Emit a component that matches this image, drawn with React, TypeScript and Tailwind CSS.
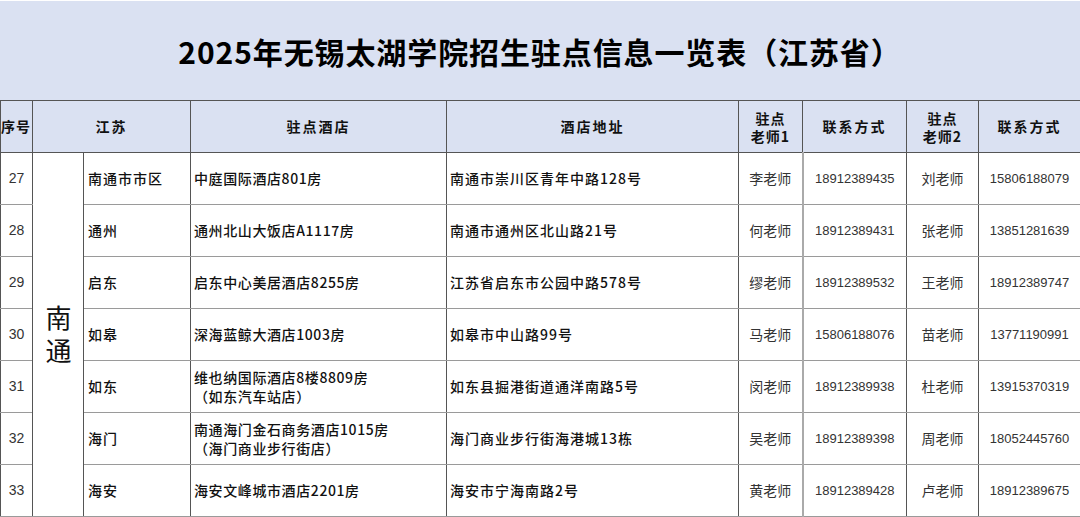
import React from "react";

type Row = {
  no: number;
  district: string;
  hotel: string[];
  addr: string;
  t1: string;
  p1: string;
  t2: string;
  p2: string;
};

const rows: Row[] = [
  { no: 27, district: "南通市市区", hotel: ["中庭国际酒店801房"], addr: "南通市崇川区青年中路128号", t1: "李老师", p1: "18912389435", t2: "刘老师", p2: "15806188079" },
  { no: 28, district: "通州", hotel: ["通州北山大饭店A1117房"], addr: "南通市通州区北山路21号", t1: "何老师", p1: "18912389431", t2: "张老师", p2: "13851281639" },
  { no: 29, district: "启东", hotel: ["启东中心美居酒店8255房"], addr: "江苏省启东市公园中路578号", t1: "缪老师", p1: "18912389532", t2: "王老师", p2: "18912389747" },
  { no: 30, district: "如皋", hotel: ["深海蓝鲸大酒店1003房"], addr: "如皋市中山路99号", t1: "马老师", p1: "15806188076", t2: "苗老师", p2: "13771190991" },
  { no: 31, district: "如东", hotel: ["维也纳国际酒店8楼8809房", "（如东汽车站店）"], addr: "如东县掘港街道通洋南路5号", t1: "闵老师", p1: "18912389938", t2: "杜老师", p2: "13915370319" },
  { no: 32, district: "海门", hotel: ["南通海门金石商务酒店1015房", "（海门商业步行街店）"], addr: "海门商业步行街海港城13栋", t1: "吴老师", p1: "18912389398", t2: "周老师", p2: "18052445760" },
  { no: 33, district: "海安", hotel: ["海安文峰城市酒店2201房"], addr: "海安市宁海南路2号", t1: "黄老师", p1: "18912389428", t2: "卢老师", p2: "18912389675" },
];

const cjk = "font-['Noto_Sans_CJK_SC','Noto_Sans',sans-serif]";
const num = "font-['Liberation_Sans','Noto_Sans_CJK_SC',sans-serif]";

export default function App() {
  return (
    <div className={`w-[1080px] h-[517px] overflow-hidden bg-white ${cjk} text-[#111]`}>
      <div className="h-[100px] bg-[#dae1f2] border-t border-t-white flex items-center justify-center">
        <h1 className="text-[30px] font-bold tracking-[0.9px] leading-none text-black">
          2025年无锡太湖学院招生驻点信息一览表（江苏省）
        </h1>
      </div>
      <table className="table-fixed border-collapse w-[1080px]">
        <colgroup>
          <col className="w-[32px]" />
          <col className="w-[51px]" />
          <col className="w-[107px]" />
          <col className="w-[256px]" />
          <col className="w-[292px]" />
          <col className="w-[64px]" />
          <col className="w-[104px]" />
          <col className="w-[72px]" />
          <col className="w-[102px]" />
        </colgroup>
        <thead>
          <tr className="h-[52px] bg-[#dae1f2] text-[14px]">
            <th className="border border-[#555] p-0 font-semibold whitespace-nowrap overflow-hidden text-right pr-[1px] tracking-[1px]">序号</th>
            <th colSpan={2} className="border border-[#555] p-0 font-semibold tracking-[2px]">江苏</th>
            <th className="border border-[#555] p-0 font-semibold tracking-[2px]">驻点酒店</th>
            <th className="border border-[#555] p-0 font-semibold tracking-[2px]">酒店地址</th>
            <th className="border border-[#555] p-0 font-semibold leading-[18px] tracking-[1px]">驻点<br />老师1</th>
            <th className="border border-[#555] p-0 font-semibold tracking-[2px]">联系方式</th>
            <th className="border border-[#555] p-0 font-semibold leading-[18px] tracking-[1px]">驻点<br />老师2</th>
            <th className="border border-[#555] p-0 font-semibold tracking-[2px]">联系方式</th>
          </tr>
        </thead>
        <tbody>
          {rows.map((r, i) => (
            <tr key={r.no} className="h-[52px]">
              <td className={`border-y border-y-[#9a9a9a] border-x border-x-[#555] p-0 text-center text-[14px] text-[#333] ${num}`}>{r.no}</td>
              {i === 0 && (
                <td rowSpan={7} className="border-y border-y-[#9a9a9a] border-x border-x-[#555] p-0 text-center align-middle">
                  <div className="flex justify-center">
                    <span className="[writing-mode:vertical-rl] [text-orientation:upright] text-[26px] leading-[26px] tracking-[7px] pt-[7px] text-[#111]">南通</span>
                  </div>
                </td>
              )}
              <td className="border-y border-y-[#9a9a9a] border-x border-x-[#555] pl-[4px] pr-0 py-0 text-[14px] font-medium tracking-[1px]">{r.district}</td>
              <td className="border-y border-y-[#9a9a9a] border-x border-x-[#555] pl-[3px] pr-0 py-0 text-[14px] font-medium leading-[19px] tracking-[0.6px]">
                {r.hotel.map((h) => (
                  <div key={h}>{h}</div>
                ))}
              </td>
              <td className="border-y border-y-[#9a9a9a] border-x border-x-[#555] pl-[3px] pr-0 py-0 text-[14px] font-medium tracking-[1px]">{r.addr}</td>
              <td className="border-y border-y-[#9a9a9a] border-l border-l-[#555] border-r-2 border-r-[#aaa] p-0 text-center text-[14px] text-[#333]">{r.t1}</td>
              <td className={`border-y border-y-[#9a9a9a] border-x border-x-[#555] p-0 text-center text-[13px] text-[#333] ${num}`}>{r.p1}</td>
              <td className="border-y border-y-[#9a9a9a] border-x border-x-[#555] p-0 text-center text-[14px] text-[#333]">{r.t2}</td>
              <td className={`border-y border-y-[#9a9a9a] border-x border-x-[#555] p-0 text-center text-[13px] text-[#333] ${num}`}>{r.p2}</td>
            </tr>
          ))}
        </tbody>
      </table>
    </div>
  );
}
